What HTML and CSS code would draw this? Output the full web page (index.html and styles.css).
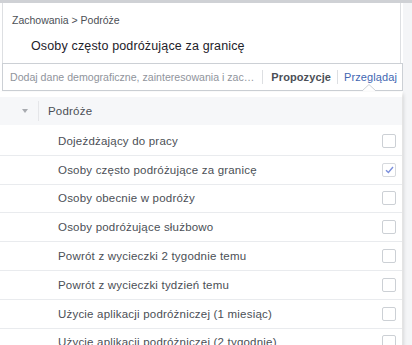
FILE: index.html
```html
<!DOCTYPE html>
<html lang="pl">
<head>
<meta charset="utf-8">
<link rel="stylesheet" href="styles.css">
</head>
<body>
<div class="topband"></div>
<div class="wrap">
  <div class="card">
    <div class="crumb">Zachowania &gt; Podróże</div>
    <div class="picked">Osoby często podróżujące za granicę</div>
  </div>
  <div class="search">
    <div class="placeholder">Dodaj dane demograficzne, zainteresowania i zac…</div>
    <span class="sep"></span>
    <span class="tab tab-sugg">Propozycje</span>
    <span class="sep"></span>
    <span class="tab tab-browse">Przeglądaj</span>
    <svg class="notch" width="14" height="7" viewBox="0 0 14 7"><path d="M0 7 L7 0.5 L14 7" fill="#fff" stroke="#ccd0d5" stroke-width="1"/></svg>
  </div>
  <div class="panel">
    <div class="cat">
      <span class="tri"></span>
      <span class="vsep"></span>
      <span class="cat-name">Podróże</span>
    </div>
    <ul class="list">
      <li class="row"><span>Dojeżdżający do pracy</span><span class="box"></span></li>
      <li class="row"><span>Osoby często podróżujące za granicę</span><span class="box checked"><svg width="9" height="8" viewBox="0 0 9 8"><path d="M1 4.2 L3.4 6.5 L8 1" fill="none" stroke="#7b8fdc" stroke-width="1.4"/></svg></span></li>
      <li class="row"><span>Osoby obecnie w podróży</span><span class="box"></span></li>
      <li class="row"><span>Osoby podróżujące służbowo</span><span class="box"></span></li>
      <li class="row"><span>Powrót z wycieczki 2 tygodnie temu</span><span class="box"></span></li>
      <li class="row"><span>Powrót z wycieczki tydzień temu</span><span class="box"></span></li>
      <li class="row"><span>Użycie aplikacji podróżniczej (1 miesiąc)</span><span class="box"></span></li>
      <li class="row"><span>Użycie aplikacji podróżniczej (2 tygodnie)</span><span class="box"></span></li>
    </ul>
  </div>
</div>
</body>
</html>
```

FILE: styles.css
```css
html, body {
  margin: 0;
  padding: 0;
  background: #f4f5f7;
  font-family: "Liberation Sans", Arial, sans-serif;
  font-size: 11.5px;
  overflow: hidden;
  height: 345px;
}
.topband {
  height: 3px;
  background: #cfd1d5;
}
.wrap {
  position: relative;
  width: 403px;
  background: #fff;
  height: 342px;
}
.card {
  margin-left: 2px;
  width: 397px;
  height: 60px;
  border-left: 1px solid #dddfe2;
  border-right: 1px solid #dddfe2;
  background: #fff;
}
.crumb {
  padding: 11px 0 0 9px;
  color: #4b4f56;
  font-size: 10.5px;
  line-height: 13px;
}
.picked {
  padding: 12px 0 0 28px;
  color: #1d2129;
  font-size: 12.5px;
  line-height: 14px;
  letter-spacing: 0.15px;
}
.search {
  position: relative;
  margin-left: 2px;
  width: 399px;
  height: 26px;
  border: 1px solid #ccd0d5;
  display: flex;
  align-items: center;
  background: #fff;
}
.placeholder {
  flex: 1;
  min-width: 0;
  padding-left: 7px;
  color: #90949c;
  font-size: 10.6px;
  white-space: nowrap;
  overflow: hidden;
}
.sep {
  flex: none;
  width: 1px;
  height: 14px;
  background: #dddfe2;
  margin: 0 6px;
}
.tab {
  flex: none;
  white-space: nowrap;
  font-size: 11px;
}
.tab-sugg {
  color: #4b4f56;
  font-weight: bold;
  margin-left: 2px;
  letter-spacing: 0.1px;
}
.tab-browse {
  color: #4267b2;
  margin-right: 5px;
  letter-spacing: 0.1px;
}
.notch {
  position: absolute;
  right: 26px;
  bottom: -1px;
  display: block;
}
.panel {
  position: relative;
  width: 402px;
  margin-top: 1px;
  background: #fff;
  box-shadow: 1px 2px 4px rgba(0,0,0,0.18);
  padding-top: 5px;
}
.cat {
  height: 28px;
  background: #f6f7f9;
  display: flex;
  align-items: center;
  color: #4b4f56;
}
.tri {
  width: 0;
  height: 0;
  border-left: 3px solid transparent;
  border-right: 3px solid transparent;
  border-top: 4px solid #a8abb0;
  margin-left: 22px;
}
.vsep {
  width: 1px;
  height: 20px;
  background: #e5e6e9;
  margin-left: 10px;
}
.cat-name {
  margin-left: 9px;
  letter-spacing: 0.2px;
}
.list {
  list-style: none;
  margin: 2px 0 0 0;
  padding: 0;
}
.row {
  height: 27.8px;
  border-bottom: 1px solid #e9ebee;
  display: flex;
  align-items: center;
  justify-content: space-between;
  padding-left: 58px;
  padding-right: 6px;
  color: #4b4f56;
  letter-spacing: 0.2px;
}
.box {
  width: 12px;
  height: 12px;
  border: 1px solid #ccd0d5;
  border-radius: 2px;
  display: flex;
  align-items: center;
  justify-content: center;
  background: #fff;
}
.box.checked {
  border-color: #d6d9dd;
}
```
